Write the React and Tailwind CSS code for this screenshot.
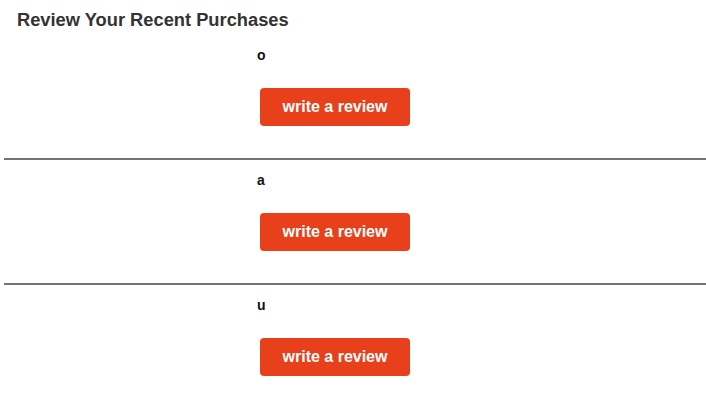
const purchases = [
  { id: 1, name: "o" },
  { id: 2, name: "a" },
  { id: 3, name: "u" },
];

const ReviewRow = ({ item, last }) => (
  <div className={`ml-[4px] pl-[253px] pt-[13px] pb-[32px] ${last ? "" : "border-b-2 border-[#747474]"}`}>
    <p className="h-[15px] text-[14px] font-bold leading-[15px] text-[#111]">{item.name}</p>
    <button
      type="button"
      className="ml-[3px] mt-[25px] flex h-[38px] w-[150px] items-center justify-center rounded-[4px] bg-[#e8401b] text-[16px] font-bold text-white"
    >
      write a review
    </button>
  </div>
);

const App = () => {
  return (
    <div className="min-h-[407px] w-[706px] bg-white font-['Liberation_Sans',Arial,sans-serif]">
      <h1 className="pl-[17px] pt-[9px] pb-[5px] text-[18.3px] font-bold leading-[21px] text-[#333]">
        Review Your Recent Purchases
      </h1>
      <div>
        {purchases.map((item, i) => (
          <ReviewRow key={item.id} item={item} last={i === purchases.length - 1} />
        ))}
      </div>
    </div>
  );
};

export default App;
